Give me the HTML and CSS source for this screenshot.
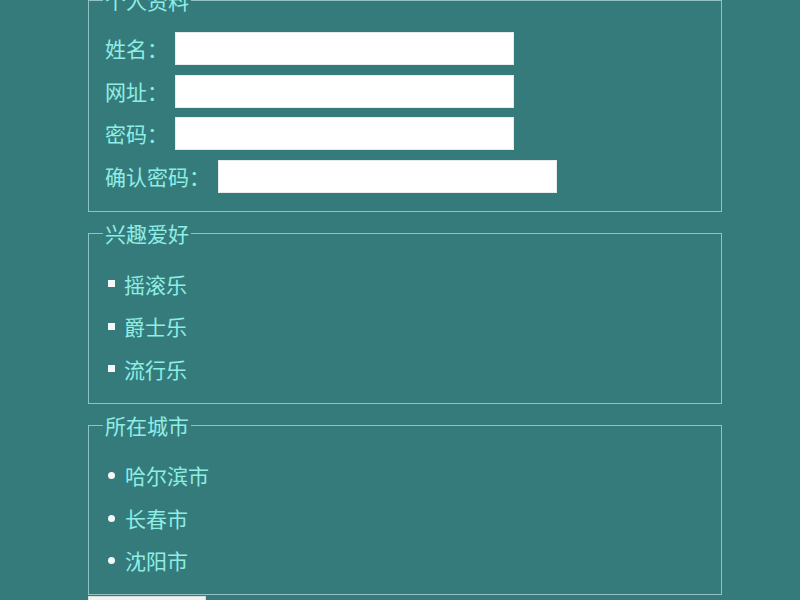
FILE: index.html
```html
<!DOCTYPE html>
<html lang="zh-CN">
<head>
<meta charset="utf-8">
<title>表单</title>
<link rel="stylesheet" href="styles.css">
</head>
<body>
<form class="page">
  <fieldset class="group group-first">
    <legend class="group-title">个人资料</legend>
    <div class="rows">
      <div class="row"><label class="label">姓名：</label><input class="field" type="text"></div>
      <div class="row"><label class="label">网址：</label><input class="field" type="text"></div>
      <div class="row"><label class="label">密码：</label><input class="field" type="password"></div>
      <div class="row"><label class="label">确认密码：</label><input class="field field-wide" type="password"></div>
    </div>
  </fieldset>
  <fieldset class="group">
    <legend class="group-title">兴趣爱好</legend>
    <ul class="list list-square">
      <li>摇滚乐</li>
      <li>爵士乐</li>
      <li>流行乐</li>
    </ul>
  </fieldset>
  <fieldset class="group">
    <legend class="group-title">所在城市</legend>
    <ul class="list list-disc">
      <li>哈尔滨市</li>
      <li>长春市</li>
      <li>沈阳市</li>
    </ul>
  </fieldset>
  <div class="submit-wrap"><button class="submit" type="button" aria-label="提交"></button></div>
</form>
</body>
</html>
```

FILE: styles.css
```css
html, body {
  margin: 0;
  padding: 0;
  background: #367b7b;
}
body {
  font-family: "Noto Sans CJK SC", "Noto Sans", sans-serif;
  font-size: 21px;
  color: #8eeee6;
  overflow: hidden;
  height: 600px;
}
.page {
  margin: -12.5px 0 0 88px;
  width: 634px;
}
.group {
  box-sizing: border-box;
  width: 634px;
  margin: 9.5px 0 0 0;
  border: 1px solid #8fc2c0;
  padding: 16.25px 16px 12.5px 16px;
  min-width: 0;
}
.group-first {
  margin-top: 0;
  padding-top: 19.5px;
  padding-bottom: 18px;
}
.group-title {
  padding: 0 2px;
  margin-left: -2px;
  line-height: 25px;
  font-size: 21px;
  color: #8eeee6;
}
.rows {
  display: flex;
  flex-direction: column;
  gap: 9.6px;
}
.row {
  display: flex;
  align-items: center;
  height: 33px;
}
.label {
  line-height: 25px;
  white-space: nowrap;
}
.field {
  box-sizing: border-box;
  width: 339px;
  height: 33px;
  margin: 0 0 0 7px;
  padding: 0 6px;
  border: 1px solid #e6ecec;
  background: #ffffff;
  outline: none;
}
.field-wide {
  margin-left: 8px;
}
.list {
  list-style: none;
  margin: 0;
  padding: 0;
}
.list li {
  display: flex;
  align-items: center;
  line-height: 42.5px;
  height: 42.5px;
}
.list li::before {
  content: "";
  width: 7px;
  height: 7px;
  margin: 0 9px 0 3px;
  background: #f4f8f8;
  flex: none;
}
.list-disc li::before {
  border-radius: 50%;
  margin-right: 10px;
}
.submit-wrap {
  margin-top: 1px;
}
.submit {
  width: 118px;
  height: 30px;
  border: 1px solid #d8dcdc;
  background: #f2f2f2;
}
```
